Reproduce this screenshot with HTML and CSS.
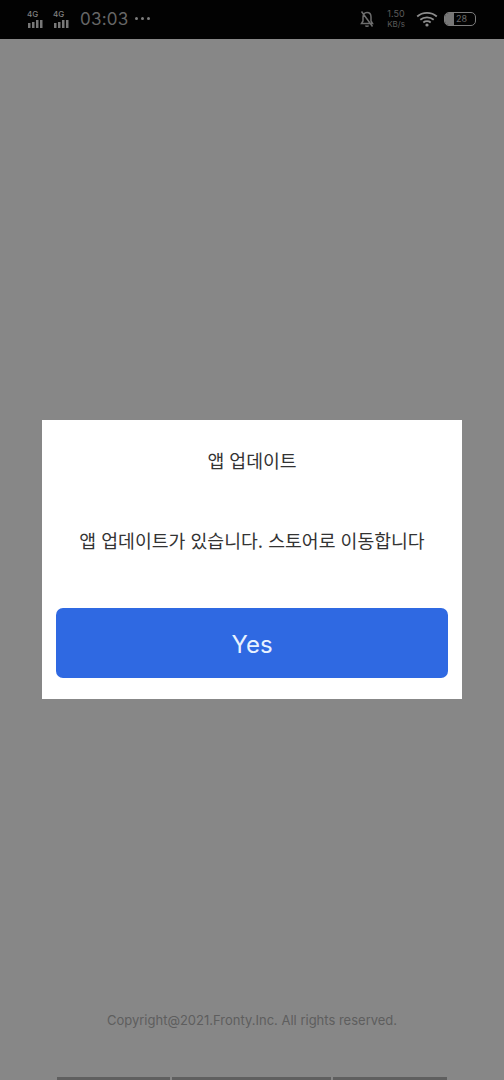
FILE: index.html
```
<!DOCTYPE html>
<html lang="ko">
<head>
<meta charset="utf-8">
<title>앱 업데이트</title>
<link rel="stylesheet" href="styles.css">
</head>
<body>
<div class="screen">
  <header class="status">
    <div class="status-left">
      <div class="net"><span class="net-label">4G</span>
        <svg class="bars" viewBox="0 0 16 9" width="16" height="9"><path d="M1 4h2.500v5H1zM5 3h2.500v6H5zM9 1h2.500v8H9zM13 1h2.500v8H13z"/></svg></div>
      <div class="net"><span class="net-label">4G</span>
        <svg class="bars" viewBox="0 0 16 9" width="16" height="9"><path d="M1 4h2.500v5H1zM5 3h2.500v6H5zM9 1h2.500v8H9zM13 1h2.500v8H13z"/></svg></div>
      <span class="clock">03:03</span>
      <span class="dots"><i></i><i></i><i></i></span>
    </div>
    <div class="status-right">
      <svg class="bell" viewBox="0 0 16 18" width="16" height="18"><path d="M8 2.500c-2.600 0-4 2-4 4.500v4l-1.500 2.500h11L12 11V7c0-2.500-1.400-4.500-4-4.500zM6.500 15.500c.4 1 2.600 1 3 0M2.500 1.500l11 15" fill="none" stroke="#6e6e6e" stroke-width="1.500"/></svg>
      <div class="speed"><span>1.50</span><span class="unit">KB/s</span></div>
      <svg class="wifi" viewBox="0 0 22 16" width="22" height="16"><path d="M1.200 5.500C6.500.7 15.500.7 20.800 5.500M4.300 8.700c3.700-3.200 9.700-3.200 13.400 0M7.300 11.500c2.100-1.700 5.300-1.700 7.400 0" fill="none" stroke="#8c8c8c" stroke-width="1.800"/><circle cx="11" cy="14" r="1.600" fill="#8c8c8c"/></svg>
      <div class="battery"><div class="battery-fill"></div><span class="battery-num">28</span></div>
    </div>
  </header>
  <main class="page">
    <p class="copyright">Copyright@2021.Fronty.Inc. All rights reserved.</p>
    <div class="tabs"><span class="tab tab-a"></span><span class="tab tab-b"></span><span class="tab tab-c"></span></div>
  </main>
  <div class="overlay">
    <section class="dialog">
      <h1 class="dialog-title">앱 업데이트</h1>
      <p class="dialog-text">앱 업데이트가 있습니다. 스토어로 이동합니다</p>
      <button class="dialog-btn">Yes</button>
    </section>
  </div>
</div>
</body>
</html>
```
FILE: styles.css
```
* { box-sizing: border-box; }
html, body { margin: 0; padding: 0; }
body { background: #878787; font-family: "Inter", "Liberation Sans", "Noto Sans CJK KR", sans-serif; }
.screen { width: 504px; height: 1080px; display: flex; flex-direction: column; overflow: hidden; }

.status { height: 39px; flex: none; background: #020202; display: flex; justify-content: space-between; align-items: center; padding: 0 28px 2px 27px; color: #8a8a8a; }
.status-left, .status-right { display: flex; align-items: center; }
.net { width: 26px; display: flex; flex-direction: column; align-items: flex-start; }
.net-label { font-size: 8px; line-height: 9px; font-weight: 500; color: #808080; }
.bars { fill: #777; }
.clock { font-size: 17px; line-height: 20px; color: #666; margin-left: 1px; letter-spacing: 0.2px; }
.dots { display: flex; gap: 3px; margin-left: 7px; }
.dots i { width: 3px; height: 3px; border-radius: 50%; background: #7d7d7d; }
.bell { margin-right: 7px; }
.speed { width: 28px; display: flex; flex-direction: column; align-items: center; font-size: 9px; line-height: 11px; color: #5c5c5c; margin-right: 6px; }
.speed .unit { font-size: 8px; }
.wifi { margin-right: 6px; }
.battery { width: 32px; height: 14px; border: 1.500px solid #7c7c7c; border-radius: 5px; overflow: hidden; display: flex; align-items: center; }
.battery-fill { width: 9px; height: 100%; background: #777; }
.battery-num { font-size: 9px; color: #6a6a6a; margin-left: 2px; }

.page { flex: 1; display: flex; flex-direction: column; align-items: center; }
.copyright { margin: 972px 0 0; font-size: 13px; line-height: 18px; color: #5e5e5e; }
.tabs { margin-top: 48px; display: flex; gap: 2px; height: 3px; }
.tab { display: block; height: 3px; background: #5f5f5f; }
.tab-a { width: 113px; }
.tab-b { width: 159px; }
.tab-c { width: 114px; }

.overlay { position: absolute; left: 0; top: 420px; width: 504px; display: flex; justify-content: center; }
.dialog { width: 420px; height: 279px; background: #fff; display: flex; flex-direction: column; align-items: center; padding: 29px 14px 21px; }
.dialog-title { margin: 0; font-size: 18.300px; line-height: 24px; font-weight: 400; color: #333; }
.dialog-text { margin: 56px 0 0; font-size: 18.300px; line-height: 24px; color: #333; }
.dialog-btn { margin-top: auto; width: 392px; height: 70px; padding: 2px 0 0; border: 0; border-radius: 7px; background: #2f69e2; color: #e8f2ff; font-family: inherit; font-size: 24px; font-weight: 400; }
```
